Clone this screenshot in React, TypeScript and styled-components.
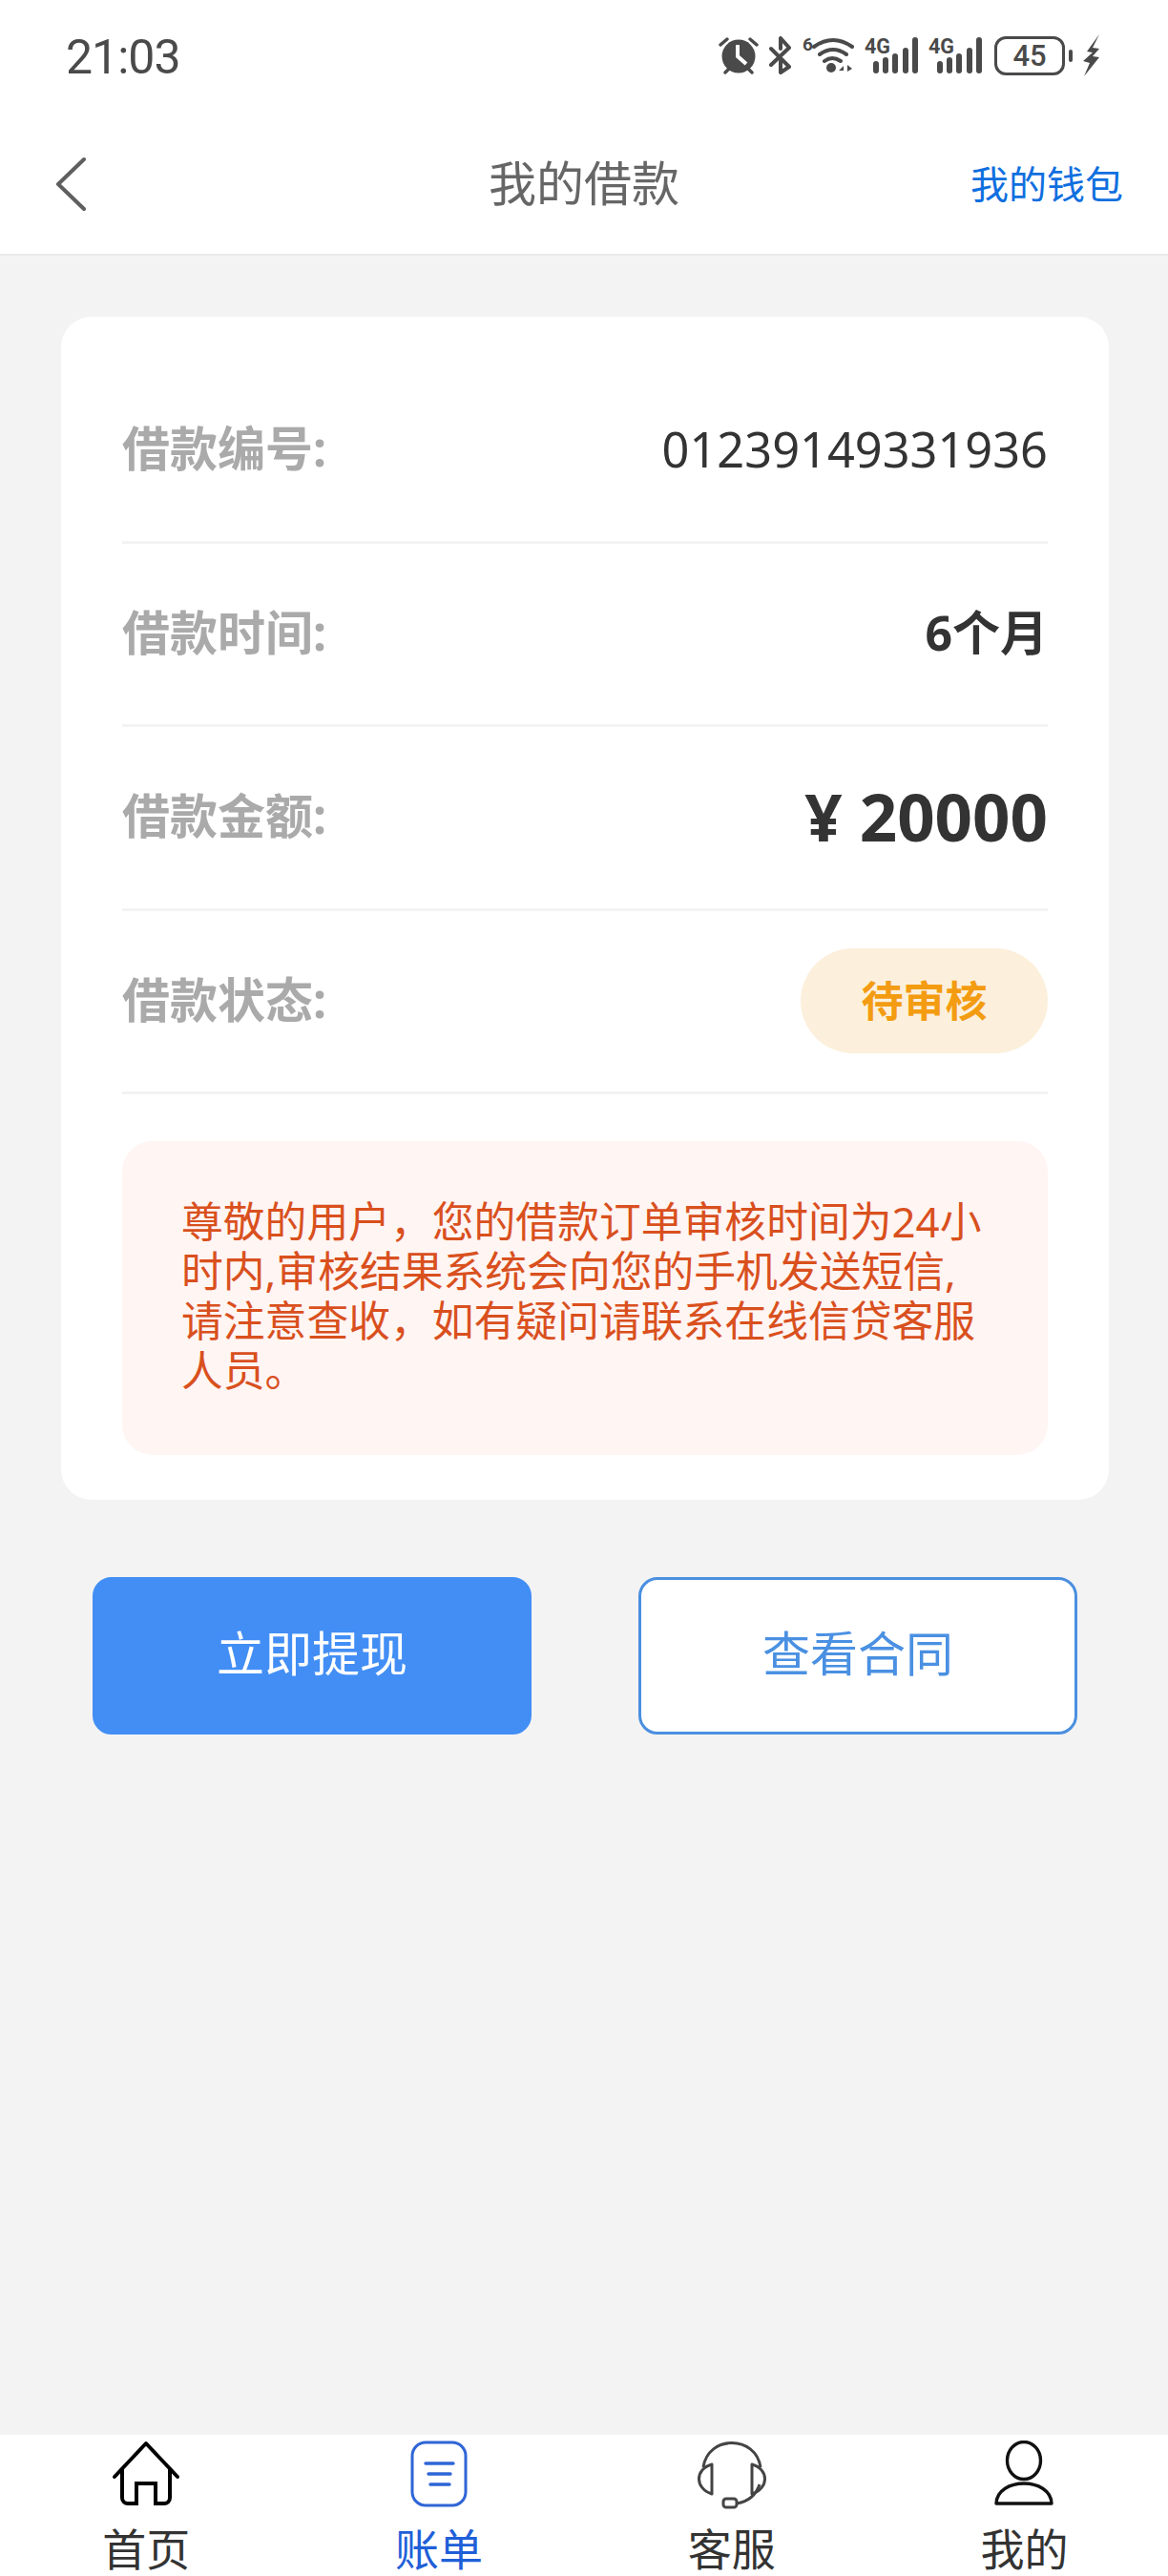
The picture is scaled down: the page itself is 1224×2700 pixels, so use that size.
import React from 'react';
import styled, { createGlobalStyle } from 'styled-components';

const FONT = `"Noto Sans", "Noto Sans CJK SC", sans-serif`;

const GlobalStyle = createGlobalStyle`
    html, body {
        margin: 0;
        padding: 0;
    }
    body {
        background: #f3f3f3;
        font-family: ${FONT};
    }
    * {
        box-sizing: border-box;
    }
`;

function AlarmIcon() {
    return (
        <svg width="42" height="40" viewBox="0 0 42 40">
            <circle cx="21" cy="21" r="17.5" fill="#4a4a4a" />
            <path d="M2 9 L9 3 M40 9 L33 3 M7 38 L11 34 M35 38 L31 34" stroke="#4a4a4a" strokeWidth="3.4" strokeLinecap="round" />
            <path d="M20 9 V21 L29 29" stroke="#fff" strokeWidth="4" fill="none" />
        </svg>
    );
}

function BluetoothIcon() {
    return (
        <svg width="24" height="40" viewBox="0 0 24 40">
            <path d="M2 13 L21 32 L12 38 V26 M2 30 L21 12 L12 2 V13" stroke="#4a4a4a" strokeWidth="4" fill="none" strokeLinecap="round" strokeLinejoin="round" />
        </svg>
    );
}

function WifiIcon() {
    return (
        <svg width="54" height="48" viewBox="0 -4 54 48">
            <text x="0" y="15" fontSize="19" fontWeight="700" fill="#4a4a4a" fontFamily="Roboto, sans-serif">6</text>
            <path d="M12 11 Q32 -3 52 11 M18 19 Q32 9 46 19 M23 26 Q31 20 40 26" stroke="#4a4a4a" strokeWidth="4" fill="none" strokeLinecap="round" />
            <circle cx="30" cy="33" r="5" fill="#4a4a4a" />
            <path d="M38 36 L43 31 V36 Z M47 30 V37 L52 34 Z" fill="#4a4a4a" />
        </svg>
    );
}

function SignalIcon() {
    const bars = [
        { x: 9, top: 26 },
        { x: 19, top: 22 },
        { x: 29, top: 18 },
        { x: 40, top: 12 },
        { x: 50, top: 1 },
    ];
    return (
        <svg width="56" height="48" viewBox="0 -4 56 48">
            <text x="0" y="18" fontSize="22" fontWeight="700" fill="#4a4a4a" fontFamily="Roboto, sans-serif" textLength="27" lengthAdjust="spacingAndGlyphs">4G</text>
            {bars.map(b => (
                <rect key={b.x} x={b.x} y={b.top} width="6" height={39 - b.top} rx="3" fill="#4a4a4a" />
            ))}
        </svg>
    );
}

function BoltIcon() {
    return (
        <svg width="18" height="44" viewBox="0 0 18 44">
            <path d="M17 0 L4 18 L10 19 L0 28 L7 30 L1 44 L17 24 L10 23 L17 15 L10 14 Z" fill="#4a4a4a" />
        </svg>
    );
}

function BackIcon() {
    return (
        <svg width="32" height="58" viewBox="0 0 32 58">
            <path d="M30 3 L3 29 L30 55" stroke="#5f5f5f" strokeWidth="4" fill="none" strokeLinecap="round" strokeLinejoin="round" />
        </svg>
    );
}

function HomeIcon() {
    return (
        <svg width="72" height="70" viewBox="0 0 72 70">
            <path d="M3 38 L36 3 L69 38" stroke="#000" strokeWidth="4" fill="none" strokeLinecap="round" strokeLinejoin="round" />
            <path d="M11 29 V60 a6 6 0 0 0 6 6 h9 V45 h20 V66 h9 a6 6 0 0 0 6 -6 V29" stroke="#000" strokeWidth="4" fill="none" />
        </svg>
    );
}

function BillIcon() {
    return (
        <svg width="60" height="70" viewBox="0 0 60 70">
            <rect x="2" y="2" width="56" height="66" rx="14" stroke="#2f65d6" strokeWidth="3" fill="none" />
            <path d="M16 24 H45 M19 35 H42 M21 46 H41" stroke="#2f65d6" strokeWidth="3.4" strokeLinecap="round" />
        </svg>
    );
}

function HeadsetIcon() {
    return (
        <svg width="74" height="72" viewBox="0 0 74 72">
            <path d="M7 28 C12 -6 62 -6 67 28" stroke="#444" strokeWidth="3" fill="none" />
            <path d="M16 25 V56 C-2 50 -2 30 16 25 Z M58 25 V56 C76 50 76 30 58 25 Z" stroke="#444" strokeWidth="3" fill="none" strokeLinejoin="round" />
            <path d="M66 46 C62 58 54 64 42 66" stroke="#444" strokeWidth="3" fill="none" />
            <rect x="28" y="61" width="14" height="9" rx="3" stroke="#444" strokeWidth="3" fill="none" />
        </svg>
    );
}

function UserIcon() {
    return (
        <svg width="62" height="70" viewBox="0 0 62 70">
            <ellipse cx="31" cy="21" rx="17.5" ry="19.5" stroke="#111" strokeWidth="3.4" fill="none" />
            <path d="M2 66 C3 38 59 38 60 66 Z" stroke="#111" strokeWidth="3.4" fill="none" strokeLinejoin="round" />
        </svg>
    );
}

function App() {
    const rows = [
        { label: '借款编号:', value: <NumberValue>01239149331936</NumberValue> },
        { label: '借款时间:', value: <MonthValue>6个月</MonthValue> },
        { label: '借款金额:', value: <AmountValue>¥ 20000</AmountValue> },
        { label: '借款状态:', value: <StatusPill>待审核</StatusPill> },
    ];

    const tabs = [
        { label: '首页', icon: <HomeIcon /> },
        { label: '账单', icon: <BillIcon />, active: true },
        { label: '客服', icon: <HeadsetIcon /> },
        { label: '我的', icon: <UserIcon /> },
    ];

    return (
        <Page>
            <GlobalStyle />
            <TopArea>
                <StatusBar>
                    <Time>21:03</Time>
                    <StatusIcons>
                        <AlarmIcon />
                        <BluetoothIcon />
                        <WifiIcon />
                        <SignalIcon />
                        <SignalIcon />
                        <Battery>45</Battery>
                        <BatteryNub />
                        <BoltIcon />
                    </StatusIcons>
                </StatusBar>
                <NavBar>
                    <BackIcon />
                    <NavTitle>我的借款</NavTitle>
                    <WalletLink>我的钱包</WalletLink>
                </NavBar>
            </TopArea>

            <Main>
                <Card>
                    {rows.map(row => (
                        <Row key={row.label}>
                            <RowLabel>{row.label}</RowLabel>
                            {row.value}
                        </Row>
                    ))}
                    <Notice>
                        尊敬的用户，您的借款订单审核时间为24小时内,审核结果系统会向您的手机发送短信,请注意查收，如有疑问请联系在线信贷客服人员。
                    </Notice>
                </Card>
                <Actions>
                    <ActionButton $primary>立即提现</ActionButton>
                    <ActionButton>查看合同</ActionButton>
                </Actions>
            </Main>

            <TabBar>
                {tabs.map(tab => (
                    <Tab key={tab.label}>
                        <TabIcon>{tab.icon}</TabIcon>
                        <TabLabel $active={tab.active}>{tab.label}</TabLabel>
                    </Tab>
                ))}
            </TabBar>
        </Page>
    );
}

export default App;

const Page = styled.div`
    display: flex;
    flex-direction: column;
    min-height: 2700px;
    background: #f3f3f3;
`;

const TopArea = styled.header`
    background: #fff;
    border-bottom: 2px solid #e9e9e9;
`;

const StatusBar = styled.div`
    height: 120px;
    padding: 36px 71px 0 69px;
    display: flex;
    justify-content: space-between;
    align-items: flex-start;
`;

const Time = styled.span`
    font-family: Roboto, sans-serif;
    font-size: 50px;
    line-height: 48px;
    letter-spacing: -1px;
    color: #4a4a4a;
`;

const StatusIcons = styled.div`
    display: flex;
    align-items: center;
    gap: 11px;
    height: 44px;
`;

const Battery = styled.span`
    width: 74px;
    height: 41px;
    margin-left: 2px;
    border: 3px solid #4a4a4a;
    border-radius: 12px;
    display: flex;
    align-items: center;
    justify-content: center;
    font-family: Roboto, sans-serif;
    font-size: 31px;
    font-weight: 500;
    color: #4a4a4a;
`;

const BatteryNub = styled.span`
    width: 4px;
    height: 13px;
    margin-left: -7px;
    border-radius: 2px;
    background: #4a4a4a;
`;

const NavBar = styled.nav`
    height: 146px;
    padding: 0 47px 0 58px;
    display: flex;
    align-items: center;
    position: relative;
    justify-content: space-between;
`;

const NavTitle = styled.h1`
    position: absolute;
    left: 0;
    right: 0;
    top: 36px;
    margin: 0;
    text-align: center;
    font-size: 50px;
    line-height: 72px;
    font-weight: 400;
    color: #666;
`;

const WalletLink = styled.span`
    font-size: 40px;
    line-height: 56px;
    color: #0f6fdf;
`;

const Main = styled.main`
    flex: 1;
    padding: 64px 62px 0 64px;
`;

const Card = styled.section`
    background: #fff;
    border-radius: 32px;
    padding: 45px 64px 47px;
`;

const Row = styled.div`
    height: 192.5px;
    border-bottom: 3px solid #f3f3f3;
    display: flex;
    align-items: center;
    justify-content: space-between;
`;

const RowLabel = styled.span`
    font-size: 50px;
    font-weight: 700;
    padding-bottom: 8px;
    color: #aaa;
`;

const NumberValue = styled.span`
    font-family: "Noto Sans", sans-serif;
    font-size: 50.5px;
    padding-bottom: 3px;
    color: #333;
`;

const MonthValue = styled.span`
    font-size: 50px;
    font-weight: 700;
    padding-bottom: 8px;
    color: #333;
`;

const AmountValue = styled.span`
    font-size: 69px;
    font-weight: 700;
    padding-bottom: 4px;
    color: #333;
`;

const StatusPill = styled.span`
    width: 259px;
    height: 110px;
    border-radius: 55px;
    background: #fcf0dc;
    display: flex;
    align-items: center;
    justify-content: center;
    font-size: 44px;
    font-weight: 700;
    padding-bottom: 4px;
    color: #f39c12;
`;

const Notice = styled.div`
    margin-top: 49px;
    padding: 58px 62px 62px;
    min-height: 329px;
    border-radius: 32px;
    background: #fff5f3;
    font-size: 43.8px;
    line-height: 52px;
    color: #d9501e;
`;

const Actions = styled.div`
    margin-top: 81px;
    padding: 0 33px;
    display: flex;
    justify-content: space-between;
`;

const ActionButton = styled.button<{ $primary?: boolean }>`
    width: 460px;
    height: 165px;
    border-radius: 20px;
    border: 3px solid ${p => (p.$primary ? '#428ef5' : '#4a8fe0')};
    background: ${p => (p.$primary ? '#428ef5' : '#fff')};
    color: ${p => (p.$primary ? '#fff' : '#4a90e2')};
    font-family: ${FONT};
    font-size: 50px;
    padding: 0 0 10px;
`;

const TabBar = styled.footer`
    height: 148px;
    background: #fff;
    display: grid;
    grid-template-columns: repeat(4, 306.7px);
`;

const Tab = styled.div`
    display: flex;
    flex-direction: column;
    align-items: center;
    padding-top: 6px;
`;

const TabIcon = styled.div`
    height: 72px;
    display: flex;
    align-items: flex-start;
`;

const TabLabel = styled.span<{ $active?: boolean }>`
    font-size: 46px;
    line-height: 58px;
    margin-top: 12px;
    color: ${p => (p.$active ? '#1f5fd8' : '#333')};
`;
